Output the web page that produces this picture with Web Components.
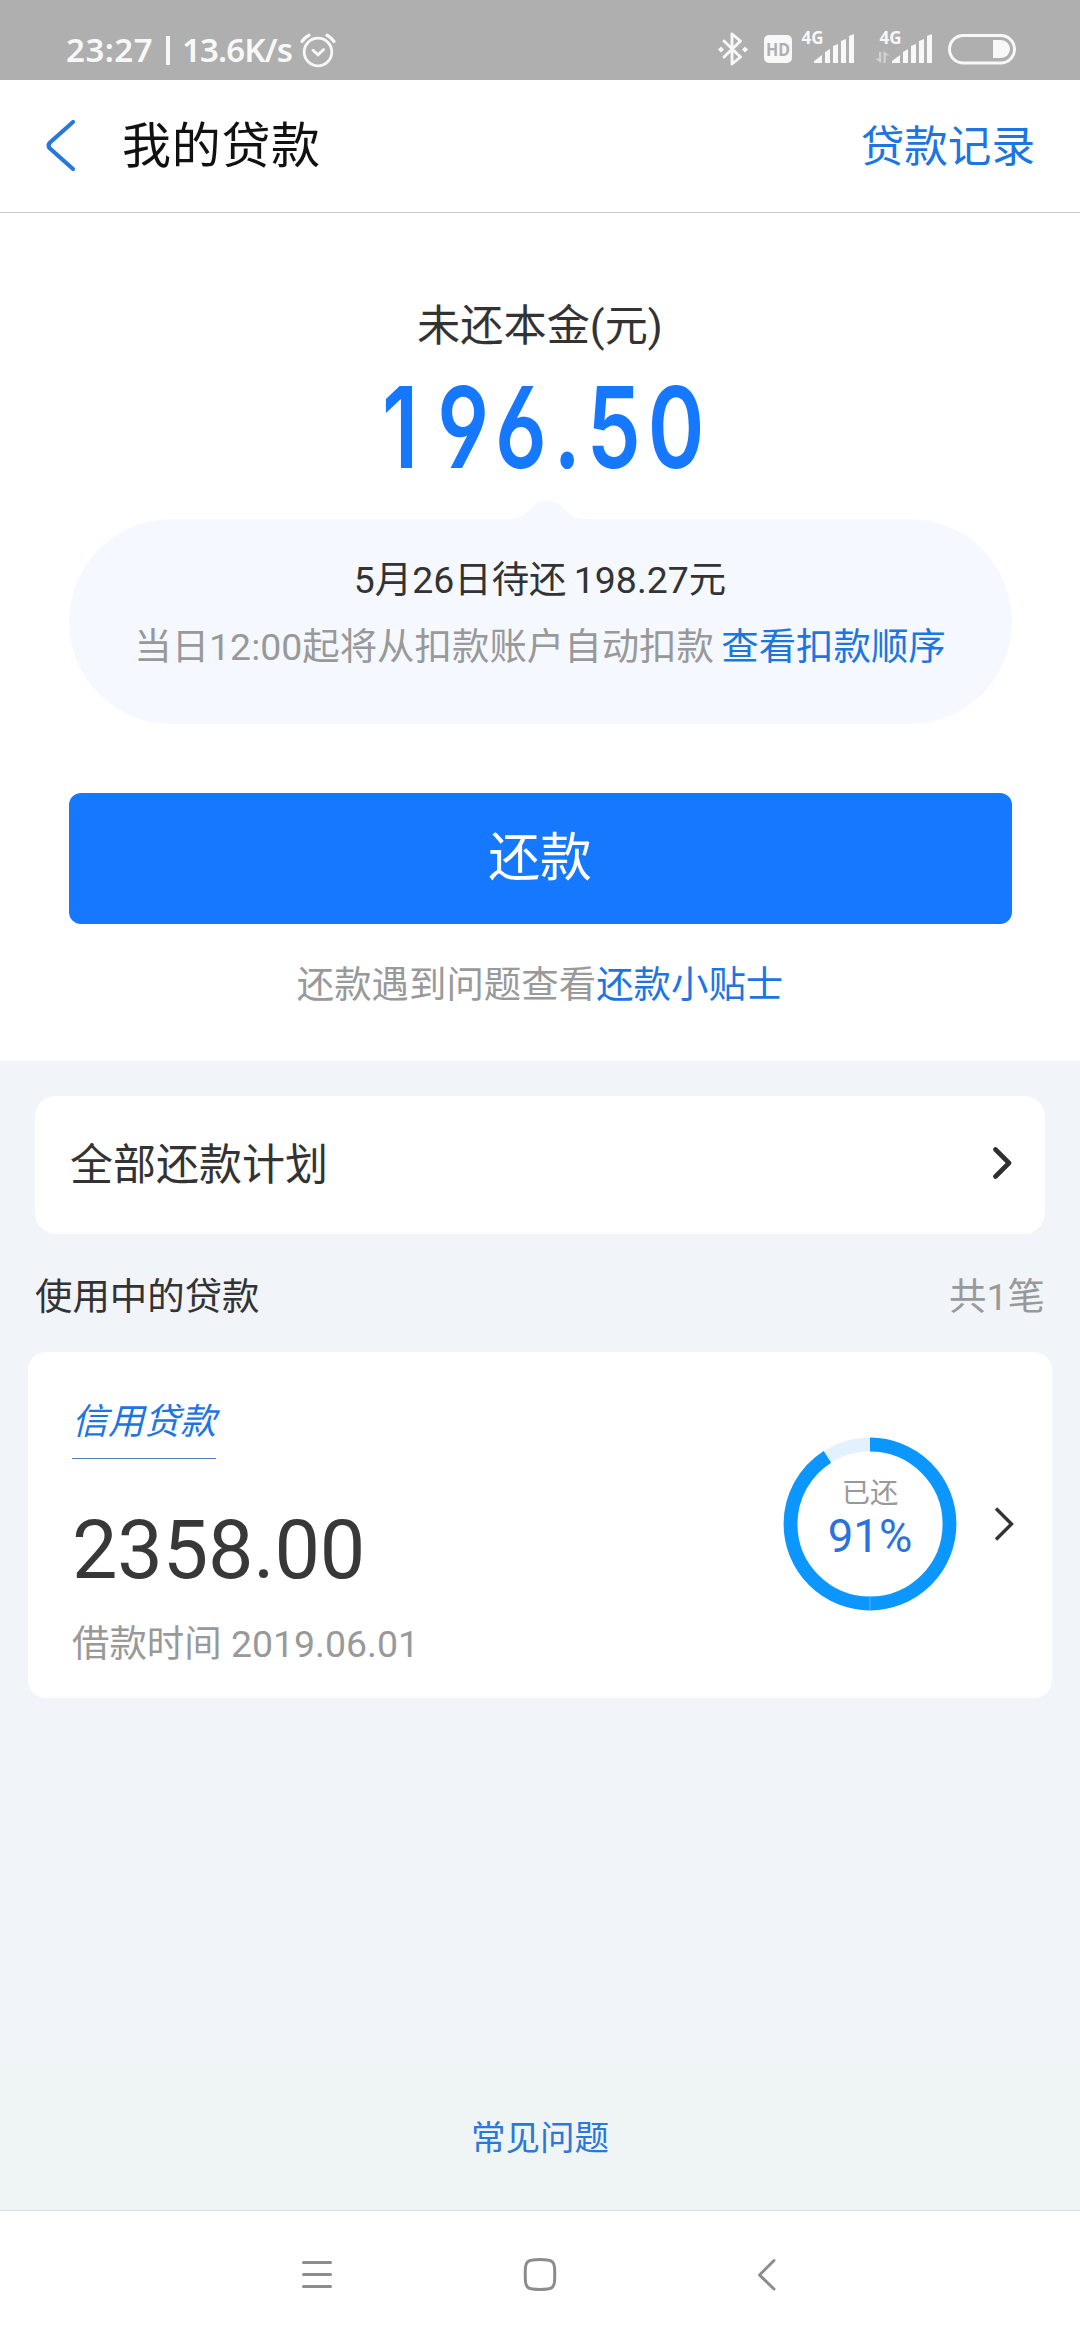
<!DOCTYPE html>
<html lang="zh-CN">
<head>
<meta charset="utf-8">
<title>我的贷款</title>
<style>
  html, body { margin: 0; padding: 0; }
  body {
    width: 1080px; height: 2340px; overflow: hidden; background: #f1f4f9;
    font-family: Roboto, "Noto Sans CJK SC", sans-serif; color: #333;
    --blue: #1c76e2; --brand: #1677ff; --muted: #999;
  }
</style>
</head>
<body>
<loan-app></loan-app>
<script>
const define = (name, html) => {
  const tpl = document.createElement('template');
  tpl.innerHTML = html;
  customElements.define(name, class extends HTMLElement {
    constructor() {
      super();
      this.attachShadow({ mode: 'open' }).appendChild(tpl.content.cloneNode(true));
    }
  });
};

define('status-bar', `
<style>
  :host { display: flex; height: 80px; box-sizing: border-box; padding: 0 64px 0 66px; background: #afafaf; color: #f8f8f8; justify-content: space-between; align-items: flex-start; font-family: "Noto Sans", sans-serif; }
  .left { display: flex; align-items: center; height: 40px; margin-top: 30px; font-size: 33px; font-weight: 600; line-height: 40px; white-space: nowrap; }
  .bar { width: 4px; height: 29px; background: #f8f8f8; margin: 0 12px 0 11px; }
  .time { width: 89px; letter-spacing: .5px; }
  .rate { width: 117px; font-size: 33px; letter-spacing: -.9px; }
  svg { display: block; }
</style>
<div class="left">
  <span class="time">23:27</span><span class="bar"></span><span class="rate">13.6K/s</span>
  <svg width="38" height="40" viewBox="299 30 38 40" fill="none" stroke="#f8f8f8" stroke-width="2.8" stroke-linecap="round">
    <circle cx="318" cy="52" r="13.8"/><path d="M313 50.2l5 4.6 5.6-5.4"/><path stroke-width="3.2" d="M302 41.5q3-4 7-6.3M334 41.5q-3-4-7-6.3"/>
  </svg>
</div>
<svg width="300" height="80" viewBox="716 0 300 80" fill="#f8f8f8" font-family="Noto Sans, sans-serif">
  <g fill="none" stroke="#f8f8f8" stroke-width="2.9" stroke-linejoin="round" stroke-linecap="round">
    <path d="M724 41l16.500 16L732 64V34l8.500 7L724 57"/>
  </g>
  <path d="M721 46.500l3 3-3 3-3-3zM745 46.500l3 3-3 3-3-3z"/>
  <rect x="764" y="35" width="28" height="28" rx="5"/>
  <text x="778" y="55.500" font-size="18" font-weight="700" text-anchor="middle" fill="#afafaf" textLength="24" lengthAdjust="spacingAndGlyphs">HD</text>
  <text x="801.500" y="44" font-size="17" font-weight="700" textLength="22" lengthAdjust="spacingAndGlyphs">4G</text>
  <text x="879.500" y="44" font-size="17" font-weight="700" textLength="22" lengthAdjust="spacingAndGlyphs">4G</text>
  <g id="b"><path d="M814 63v-2l8-6v8zM825 63V52l5-3v14zM833 63V46l5-2v19zM841 63V41l5-2v24zM849 63V36l5-2v29z"/></g>
  <use href="#b" x="78"/>
  <path fill="#d2d2d2" d="M879 52h2.200v11L875 58.500h4zM883.500 63h2.200v-7.500h3.500L883.500 51z"/>
  <rect x="949.500" y="35.500" width="65" height="27.500" rx="13.750" fill="none" stroke="#f8f8f8" stroke-width="3"/>
  <path d="M993 40h8a9 9 0 0 1 0 18h-8z"/>
</svg>`);

define('title-bar', `
<style>
  :host { display: flex; height: 133px; box-sizing: border-box; border-bottom: 1px solid #c8c8c8; background: #fff; align-items: center; padding: 0 45px 0 44px; }
  svg { display: block; width: 34px; height: 58px; margin-right: 44px; }
  ::slotted([slot=title]) { flex: 1; font-size: 49px; line-height: 70px; color: #111; letter-spacing: .7px; padding-top: 1px; }
  ::slotted([slot=action]) { font-size: 43.600px; line-height: 70px; padding-top: 4px; color: var(--blue); }
</style>
<svg viewBox="44 117 34 58" fill="none" stroke="#2878dc" stroke-width="4.200" stroke-linecap="round" stroke-linejoin="round"><path d="M73 122L50 142.500q-3 3 0 6L73 169"/></svg>
<slot name="title"></slot><slot name="action"></slot>`);

define('due-bubble', `
<style>
  :host { display: block; width: 943px; height: 223px; margin: 0 auto; }
  svg { display: block; width: 70px; height: 18px; margin-left: 443px; }
  .pill { height: 205px; box-sizing: border-box; padding-top: 28px; border-radius: 103px; background: #f5f8ff; text-align: center; font-size: 37.440px; line-height: 66.500px; white-space: nowrap; word-spacing: -2px; }
  .note { color: var(--muted); }
  a { color: var(--blue); }
</style>
<svg viewBox="0 0 70 18"><path fill="#f5f8ff" d="M0 18C17 17 17 0 35 0S53 17 70 18z"/></svg>
<div class="pill">
  <div class="due">5月26日待还 198.27元</div>
  <div class="note">当日12:00起将从扣款账户自动扣款 <a>查看扣款顺序</a></div>
</div>`);

define('loan-summary', `
<style>
  :host { display: flex; flex-direction: column; height: 848px; background: #fff; align-items: center; }
  .label { margin-top: 84px; height: 60px; font-size: 43.200px; line-height: 60px; }
  .amount { height: 130px; margin: 5px 0 0 13px; font: 600 113px/130px Inter, sans-serif; font-feature-settings: "cv03", "cv04"; color: var(--brand); transform: scaleX(.76); letter-spacing: 8.900px; white-space: nowrap; }
  .amount::first-letter { letter-spacing: 25px; }
  due-bubble { margin-top: 9px; }
  button { width: 943px; height: 131px; margin: 69px 0 0; padding: 0; border: 0; border-radius: 12px; background: var(--brand); color: #fff; font: inherit; font-size: 51.840px; line-height: 130px; }
  .tip { margin-top: 31px; font-size: 37.440px; line-height: 60px; color: var(--muted); }
  a { color: var(--blue); }
</style>
<div class="label">未还本金(元)</div>
<div class="amount">196.50</div>
<due-bubble></due-bubble>
<button>还款</button>
<div class="tip">还款遇到问题查看<a>还款小贴士</a></div>`);

define('plan-link', `
<style>
  :host { display: flex; height: 138px; margin: 35px 35px 0; box-sizing: border-box; padding: 0 33px 1px 35px; border-radius: 21px; background: #fff; align-items: center; justify-content: space-between; font-size: 43px; line-height: 60px; }
  svg { width: 20px; height: 34px; margin-bottom: 3px; }
</style>
<slot></slot>
<svg viewBox="0 0 20 34" fill="none" stroke="#2f2f2f" stroke-width="4.600" stroke-linecap="round" stroke-linejoin="round"><path d="M3.500 3.500L17 17 3.500 30.500"/></svg>`);

define('section-head', `
<style>
  :host { display: flex; justify-content: space-between; margin: 32px 35px 0; height: 62px; line-height: 62px; font-size: 37.440px; }
  ::slotted([slot=count]) { color: var(--muted); }
</style>
<slot></slot><slot name="count"></slot>`);

define('progress-ring', `
<style>
  :host { display: grid; width: 174px; height: 174px; }
  svg, .txt { grid-area: 1 / 1; }
  .txt { display: flex; flex-direction: column; align-items: center; padding-top: 37px; }
  .k { font-size: 28.300px; line-height: 40px; color: var(--muted); }
  .v { font-size: 45.500px; line-height: 46px; color: #2b72dc; }
</style>
<svg viewBox="-87 -87 174 174" fill="none" stroke-width="13.800">
  <circle r="79.500" stroke="#e3f1ff"/>
  <circle r="79.500" stroke="#0b97ff" pathLength="100" stroke-dasharray="91 100" transform="rotate(-90)"/>
  <path d="M0 72.500V86.500" stroke="#55b7ff" stroke-width="1"/>
</svg>
<div class="txt"><span class="k">已还</span><span class="v">91%</span></div>`);

define('loan-card', `
<style>
  :host { display: flex; width: 1024px; height: 346px; margin: 24px 28px 0; box-sizing: border-box; padding: 0 36px 0 44px; border-radius: 18px; background: #fff; align-items: center; }
  .info { flex: 1; align-self: stretch; display: flex; flex-direction: column; align-items: flex-start; }
  .tag { width: 144px; height: 107px; box-sizing: border-box; padding-top: 40px; border-bottom: 1px solid #4f7fbd; font-size: 36px; line-height: 60px; font-style: italic; color: var(--blue); white-space: nowrap; }
  .sum { margin-top: 47px; font-size: 81px; line-height: 90px; color: #383838; letter-spacing: -.2px; }
  .date { margin-top: 18px; font-size: 37.440px; line-height: 60px; color: var(--muted); }
  progress-ring { margin: 0 37px 2px 0; }
  svg { width: 22px; height: 36px; margin-bottom: 2px; }
</style>
<div class="info">
  <div class="tag"><slot name="kind"></slot></div>
  <div class="sum"><slot name="sum"></slot></div>
  <div class="date"><slot name="date"></slot></div>
</div>
<progress-ring></progress-ring>
<svg viewBox="0 0 22 36" fill="none" stroke="#333" stroke-width="3.400"><path d="M2 2.500L17.500 18 2 33.500"/></svg>`);

define('faq-bar', `
<style>
  :host { display: block; height: 147px; box-sizing: border-box; padding-top: 44px; border-bottom: 1px solid #d9dede; background: #eff4f5; text-align: center; font-size: 34.560px; line-height: 60px; color: #2a78dc; }
</style>
<slot></slot>`);

define('nav-bar', `
<style>
  :host { display: flex; height: 129px; background: #fff; justify-content: space-between; padding: 0 300px; }
  svg { display: block; width: 34px; height: 40px; margin-top: 44px; fill: none; stroke: #8c8c8c; stroke-width: 3; stroke-linecap: round; }
</style>
<svg viewBox="0 0 34 40"><path d="M3.500 7.500h27M3.500 19.500h27M3.500 31.500h27"/></svg>
<svg viewBox="0 0 34 40"><path d="M9.500 5Q17 4 24.500 5 31 5.500 31.500 12 32 19.500 31.500 27 31 33.500 24.500 34 17 35 9.500 34 3 33.500 2.500 27 2 19.500 2.500 12 3 5.500 9.500 5z"/></svg>
<svg viewBox="0 0 34 40" stroke-linejoin="round"><path d="M28 5.500L13.500 20 28 34"/></svg>`);

define('loan-app', `
<style>
  :host { display: flex; flex-direction: column; width: 1080px; height: 2340px; }
  .grow { flex: 1; }
</style>
<status-bar></status-bar>
<title-bar><span slot="title">我的贷款</span><span slot="action">贷款记录</span></title-bar>
<loan-summary></loan-summary>
<plan-link>全部还款计划</plan-link>
<section-head>使用中的贷款<span slot="count">共1笔</span></section-head>
<loan-card><span slot="kind">信用贷款</span><span slot="sum">2358.00</span><span slot="date">借款时间 2019.06.01</span></loan-card>
<div class="grow"></div>
<faq-bar>常见问题</faq-bar>
<nav-bar></nav-bar>`);
</script>
</body>
</html>
